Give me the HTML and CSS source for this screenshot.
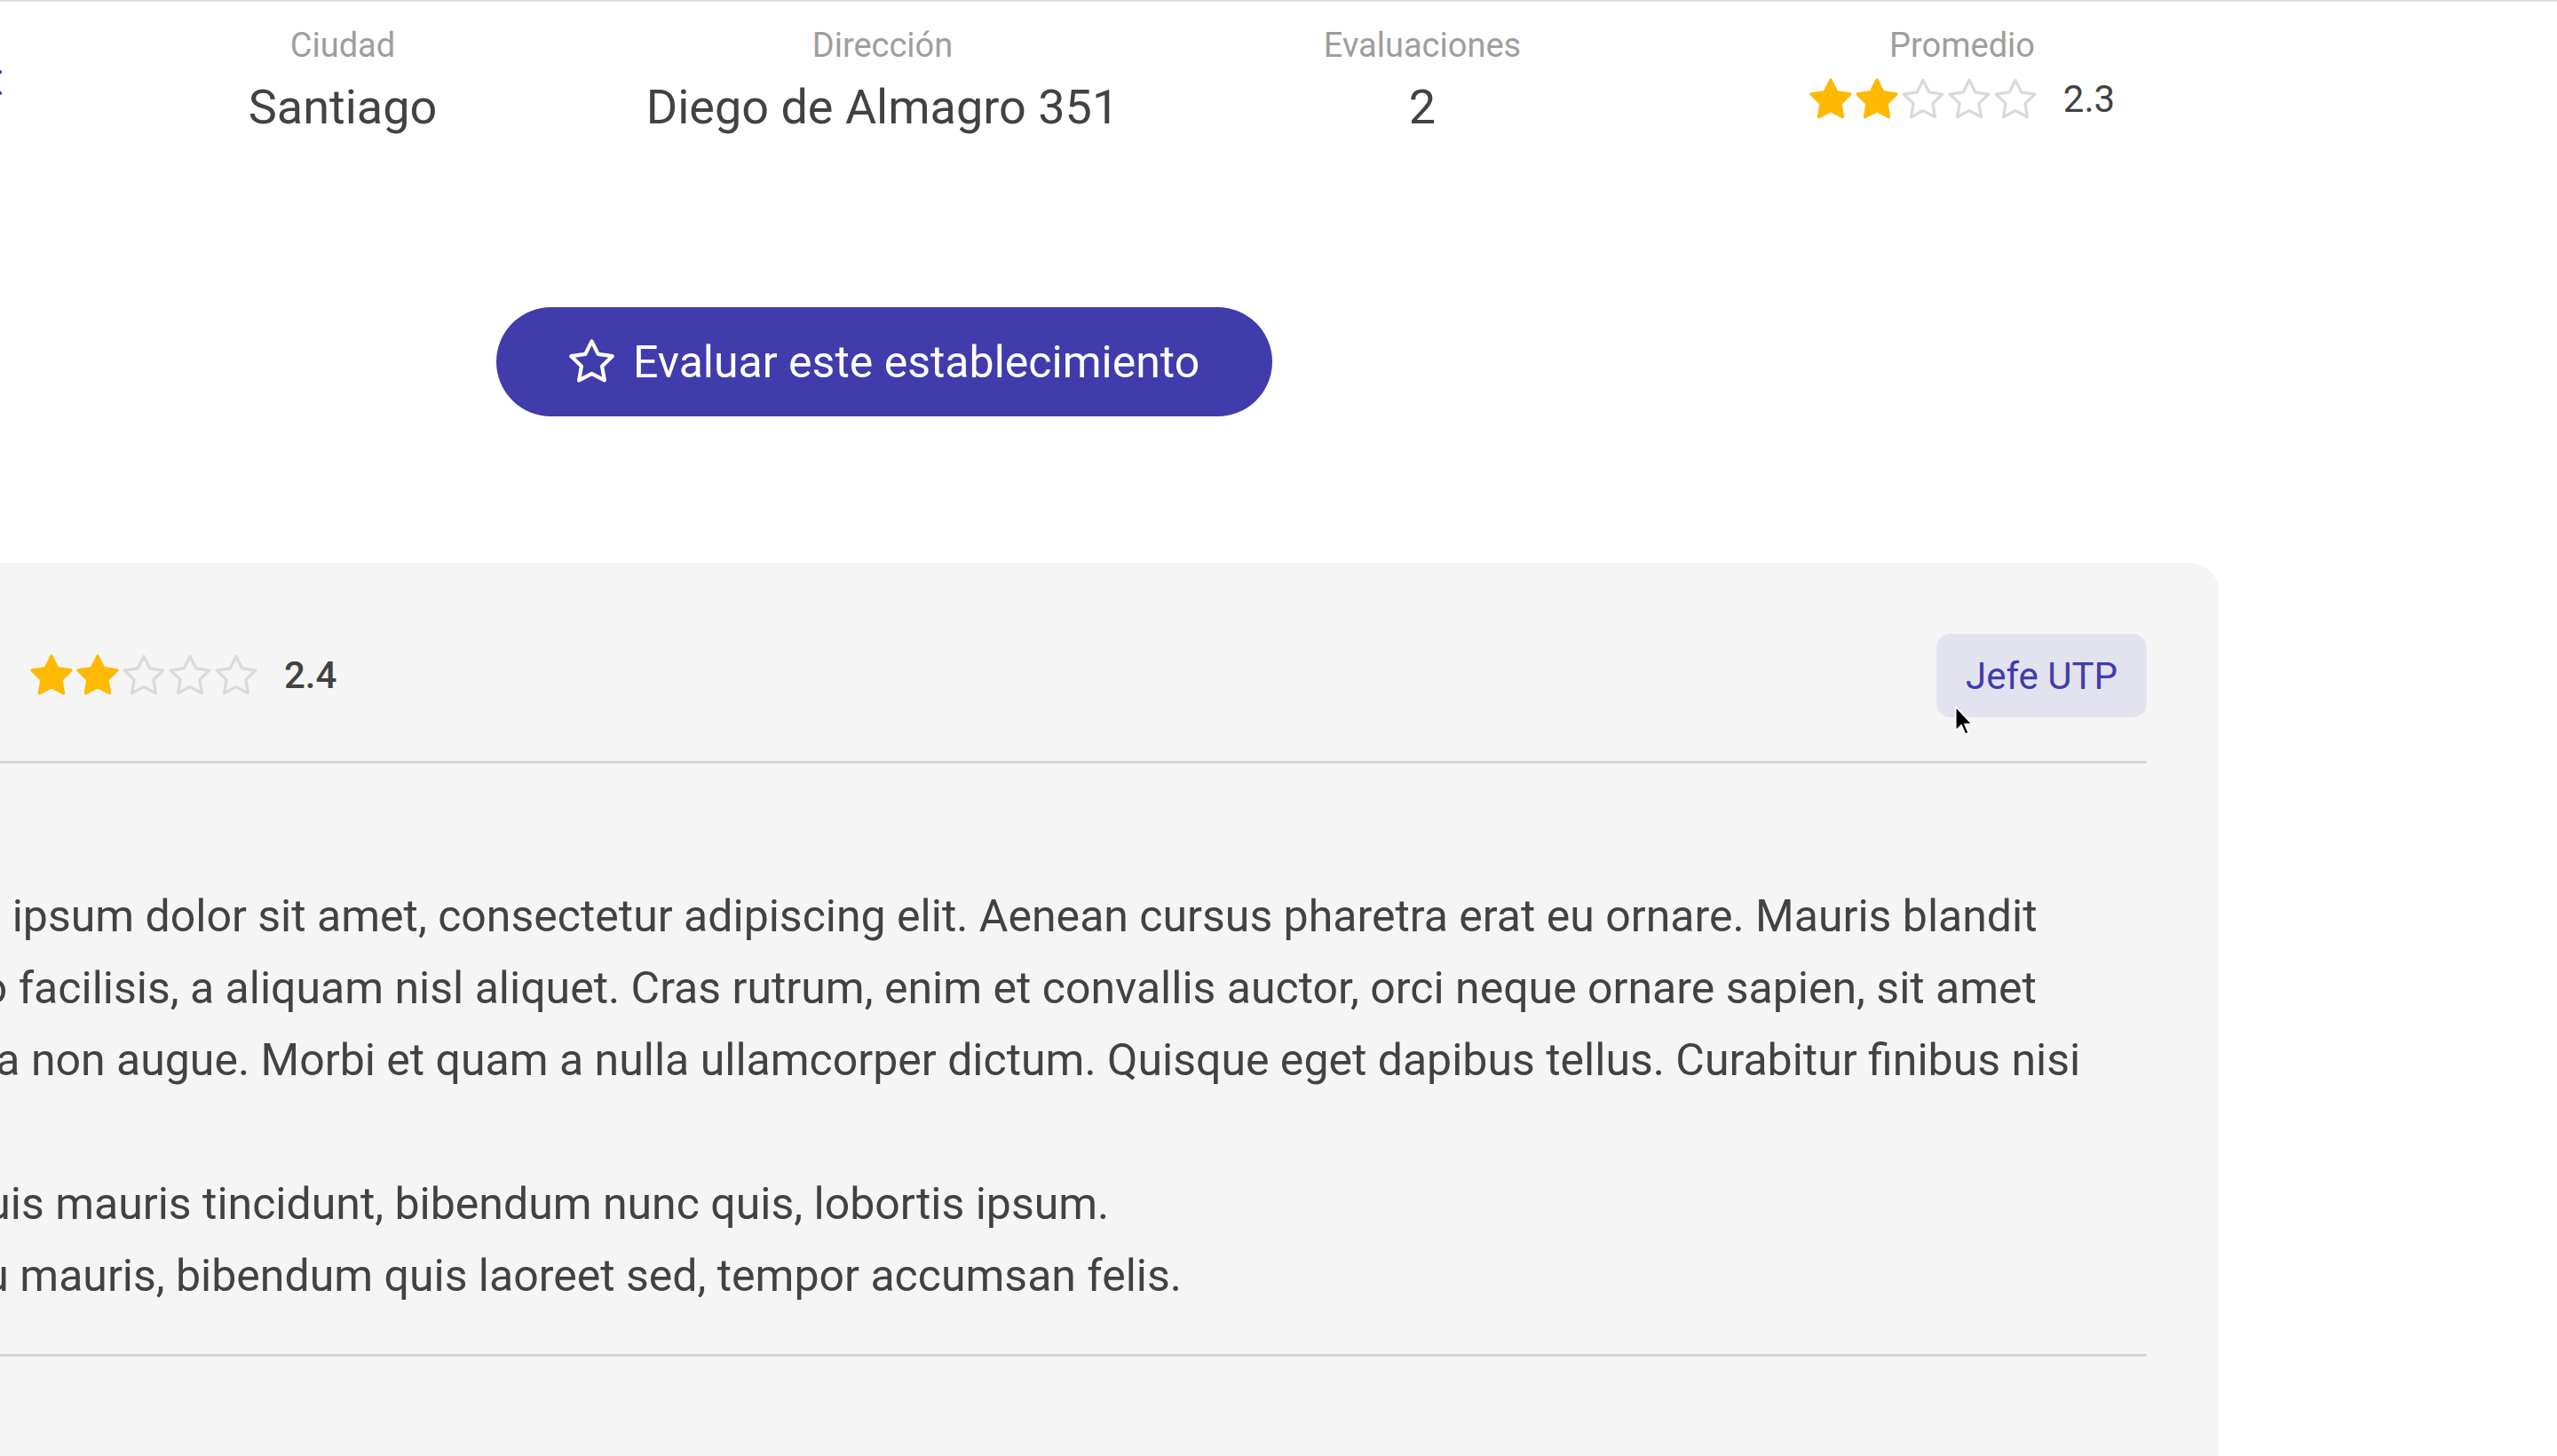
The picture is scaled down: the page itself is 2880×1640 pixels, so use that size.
FILE: index.html
```html
<!DOCTYPE html>
<html lang="es">
<head>
<meta charset="utf-8">
<title>Establecimiento</title>
<link rel="stylesheet" href="styles.css">
</head>
<body>
<div class="topline"></div>
<div class="content">
  <div class="header">
    <a class="back" href="#" aria-label="Volver">
      <svg viewBox="0 0 32 32"><path d="M30.5 4 L17 16 L30.5 28" fill="none" stroke="#403cac" stroke-width="3.5" stroke-linecap="round" stroke-linejoin="round"/></svg>
    </a>
    <div class="stats">
      <div class="stat">
        <div class="stat-label">Ciudad</div>
        <div class="stat-value">Santiago</div>
      </div>
      <div class="stat">
        <div class="stat-label">Dirección</div>
        <div class="stat-value">Diego de Almagro 351</div>
      </div>
      <div class="stat">
        <div class="stat-label">Evaluaciones</div>
        <div class="stat-value">2</div>
      </div>
      <div class="stat">
        <div class="stat-label">Promedio</div>
        <div class="rating rating-header">
          <div class="stars">
            <svg class="star full" viewBox="1 1 22 22"><polygon points="12,2 15.09,8.26 22,9.27 17,14.14 18.18,21.02 12,17.77 5.82,21.02 7,14.14 2,9.27 8.91,8.26"/></svg>
            <svg class="star full" viewBox="1 1 22 22"><polygon points="12,2 15.09,8.26 22,9.27 17,14.14 18.18,21.02 12,17.77 5.82,21.02 7,14.14 2,9.27 8.91,8.26"/></svg>
            <svg class="star empty" viewBox="1 1 22 22"><polygon points="12,2 15.09,8.26 22,9.27 17,14.14 18.18,21.02 12,17.77 5.82,21.02 7,14.14 2,9.27 8.91,8.26"/></svg>
            <svg class="star empty" viewBox="1 1 22 22"><polygon points="12,2 15.09,8.26 22,9.27 17,14.14 18.18,21.02 12,17.77 5.82,21.02 7,14.14 2,9.27 8.91,8.26"/></svg>
            <svg class="star empty" viewBox="1 1 22 22"><polygon points="12,2 15.09,8.26 22,9.27 17,14.14 18.18,21.02 12,17.77 5.82,21.02 7,14.14 2,9.27 8.91,8.26"/></svg>
          </div>
          <span class="num">2.3</span>
        </div>
      </div>
    </div>
  </div>

  <div class="actions">
    <button class="btn" type="button">
      <svg class="btn-icon" viewBox="1 1 22 22"><polygon points="12,2 15.09,8.26 22,9.27 17,14.14 18.18,21.02 12,17.77 5.82,21.02 7,14.14 2,9.27 8.91,8.26"/></svg>
      <span>Evaluar este establecimiento</span>
    </button>
  </div>

  <div class="card">
    <div class="review-head">
      <div class="rating rating-review">
        <div class="stars">
          <svg class="star full" viewBox="1 1 22 22"><polygon points="12,2 15.09,8.26 22,9.27 17,14.14 18.18,21.02 12,17.77 5.82,21.02 7,14.14 2,9.27 8.91,8.26"/></svg>
          <svg class="star full" viewBox="1 1 22 22"><polygon points="12,2 15.09,8.26 22,9.27 17,14.14 18.18,21.02 12,17.77 5.82,21.02 7,14.14 2,9.27 8.91,8.26"/></svg>
          <svg class="star empty" viewBox="1 1 22 22"><polygon points="12,2 15.09,8.26 22,9.27 17,14.14 18.18,21.02 12,17.77 5.82,21.02 7,14.14 2,9.27 8.91,8.26"/></svg>
          <svg class="star empty" viewBox="1 1 22 22"><polygon points="12,2 15.09,8.26 22,9.27 17,14.14 18.18,21.02 12,17.77 5.82,21.02 7,14.14 2,9.27 8.91,8.26"/></svg>
          <svg class="star empty" viewBox="1 1 22 22"><polygon points="12,2 15.09,8.26 22,9.27 17,14.14 18.18,21.02 12,17.77 5.82,21.02 7,14.14 2,9.27 8.91,8.26"/></svg>
        </div>
        <span class="num">2.4</span>
      </div>
      <span class="badge">Jefe UTP</span>
    </div>
    <div class="divider"></div>
    <p class="review-text">Lorem ipsum dolor sit amet, consectetur adipiscing elit. Aenean cursus pharetra erat eu ornare. Mauris blandit<br>a justo facilisis, a aliquam nisl aliquet. Cras rutrum, enim et convallis auctor, orci neque ornare sapien, sit amet<br>tortor a non augue. Morbi et quam a nulla ullamcorper dictum. Quisque eget dapibus tellus. Curabitur finibus nisi<br>a elit.<br>Sed quis mauris tincidunt, bibendum nunc quis, lobortis ipsum.<br>Sed eu mauris, bibendum quis laoreet sed, tempor accumsan felis.</p>
    <div class="divider divider-bottom"></div>
  </div>
</div>

<svg class="cursor" viewBox="0 0 13 21"><path d="M1 1 L1 17 L4.8 13.4 L7.4 19.4 L9.6 18.5 L7.1 12.6 L12 12.6 Z" fill="#000" stroke="#fff" stroke-width="1" stroke-linejoin="round"/></svg>
</body>
</html>
```

FILE: styles.css
```css
* {
  box-sizing: border-box;
}

html,
body {
  margin: 0;
  padding: 0;
  background: #ffffff;
  overflow: hidden;
}

body {
  position: relative;
  width: 2880px;
  height: 1640px;
  font-family: Roboto, "Noto Sans", "Liberation Sans", sans-serif;
  color: #424242;
}

.topline {
  height: 2px;
  background: #e0e0e0;
}

.content {
  margin-left: -60px;
}

.header {
  display: flex;
  align-items: flex-start;
}

.back {
  flex: none;
  width: 62px;
  margin-top: 75px;
  display: flex;
  justify-content: flex-end;
}

.back svg {
  display: block;
  width: 32px;
  height: 32px;
}

.stats {
  margin-left: 80px;
  padding-top: 27px;
  display: grid;
  grid-template-columns: repeat(4, 608px);
}

.stat {
  display: flex;
  flex-direction: column;
  align-items: center;
}

.stat-label {
  font-size: 38px;
  line-height: 45px;
  color: #9e9e9e;
}

.stat-value {
  margin-top: 15px;
  font-size: 54px;
  line-height: 64px;
  color: #424242;
}

.rating {
  display: flex;
  align-items: center;
}

.rating-header {
  margin-top: 14px;
  height: 48px;
}

.stars {
  display: flex;
  gap: 4px;
}

.star {
  display: block;
  width: 48px;
  height: 48px;
}

.star.full polygon {
  fill: #ffb900;
  stroke: #ffb900;
  stroke-width: 1.6;
  stroke-linejoin: round;
}

.star.empty polygon {
  fill: none;
  stroke: #dadada;
  stroke-width: 1.5;
  stroke-linejoin: round;
}

.rating .num {
  margin-left: 30px;
  font-size: 42px;
  line-height: 48px;
  color: #424242;
}

.rating-review .num {
  font-weight: 500;
}

.actions {
  display: flex;
  margin-top: 193px;
  padding-left: 619px;
}

.btn {
  display: flex;
  align-items: center;
  gap: 21px;
  height: 123px;
  padding: 0 82px;
  border: none;
  border-radius: 62px;
  background: #403cac;
  color: #ffffff;
  font-family: inherit;
  font-size: 50px;
  line-height: 1;
  cursor: pointer;
}

.btn-icon {
  display: block;
  width: 51px;
  height: 51px;
}

.btn-icon polygon {
  fill: none;
  stroke: #ffffff;
  stroke-width: 1.8;
  stroke-linejoin: round;
}

.card {
  margin-top: 165px;
  margin-left: -155px;
  width: 2714px;
  padding: 80px 81px 300px 74px;
  background: #f5f5f5;
  border-radius: 32px;
}

.review-head {
  display: flex;
  align-items: center;
  justify-content: space-between;
  height: 94px;
}

.rating-review {
  margin-left: 175px;
}

.badge {
  display: flex;
  align-items: center;
  height: 94px;
  padding: 0 33px;
  border-radius: 16px;
  background: #e3e2ef;
  color: #403cac;
  font-size: 42px;
}

.divider {
  height: 3px;
  margin-top: 49px;
  background: #d6d6d6;
}

.review-text {
  margin: 132px 0 0;
  font-size: 50px;
  line-height: 81px;
  color: #424242;
  white-space: nowrap;
}

.divider-bottom {
  margin-top: 47px;
}

.cursor {
  position: absolute;
  left: 2201px;
  top: 794px;
  width: 22px;
  height: 36px;
}
```
